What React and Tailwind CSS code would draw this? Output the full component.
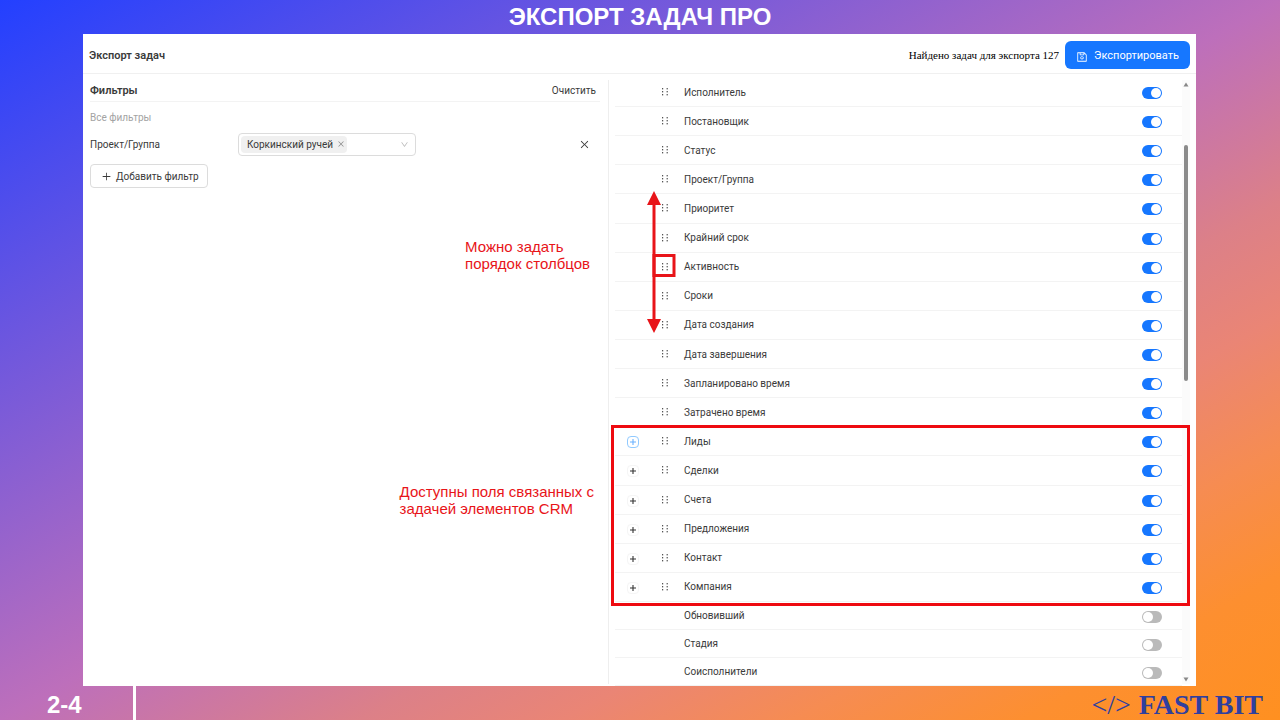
import { useState } from 'react'
import {
  AiOutlineClose,
  AiOutlineDown,
  AiOutlinePlus,
  AiOutlineSave,
} from 'react-icons/ai'

const ACTIVE_FIELDS = [
  { id: 'responsible', label: 'Исполнитель' },
  { id: 'creator', label: 'Постановщик' },
  { id: 'status', label: 'Статус' },
  { id: 'group', label: 'Проект/Группа' },
  { id: 'priority', label: 'Приоритет' },
  { id: 'deadline', label: 'Крайний срок' },
  { id: 'activity', label: 'Активность' },
  { id: 'terms', label: 'Сроки' },
  { id: 'created', label: 'Дата создания' },
  { id: 'closed', label: 'Дата завершения' },
  { id: 'planned', label: 'Запланировано время' },
  { id: 'spent', label: 'Затрачено время' },
  { id: 'leads', label: 'Лиды', expandable: true, focused: true },
  { id: 'deals', label: 'Сделки', expandable: true },
  { id: 'invoices', label: 'Счета', expandable: true },
  { id: 'quotes', label: 'Предложения', expandable: true },
  { id: 'contact', label: 'Контакт', expandable: true },
  { id: 'company', label: 'Компания', expandable: true },
]

const HIDDEN_FIELDS = [
  { id: 'changed_by', label: 'Обновивший' },
  { id: 'stage', label: 'Стадия' },
  { id: 'accomplices', label: 'Соисполнители' },
]

function DragDots() {
  return (
    <svg width="8" height="10" viewBox="0 0 8 10" fill="#555" aria-hidden="true">
      {[1, 4, 7].map((y) => (
        <g key={y}>
          <rect x="1" y={y} width="1.2" height="1.4" />
          <rect x="5.6" y={y} width="1.2" height="1.4" />
        </g>
      ))}
    </svg>
  )
}

function ExpandPlus() {
  return (
    <svg width="10" height="10" viewBox="0 0 10 10" stroke="currentColor" strokeWidth="1.1" className="shrink-0" aria-hidden="true">
      <path d="M5 2V8M2 5H8" />
    </svg>
  )
}

function Switch({ id, checked, onChange }) {
  return (
    <input
      id={id}
      type="checkbox"
      role="switch"
      checked={checked}
      onChange={onChange}
      className="relative mt-0.5 h-3 w-5 shrink-0 cursor-pointer appearance-none rounded-full bg-[#bababa] before:absolute before:left-px before:top-px before:h-2.5 before:w-2.5 before:rounded-full before:bg-white checked:bg-[#1677ff] checked:before:left-[9px]"
    />
  )
}

function FieldRow({ field, draggable, checked, onToggle }) {
  return (
    <li className="flex items-center border-b border-[#f3f3f3] pr-5">
      <div className="flex w-9 shrink-0 justify-center">
        {field.expandable && (
          <button
            type="button"
            aria-label={`Развернуть: ${field.label}`}
            className={
              field.focused
                ? 'mt-0.5 flex h-3 w-3 items-center justify-center rounded border border-[#91caff] text-[#69b1ff]'
                : 'mt-0.5 flex h-3 w-3 items-center justify-center rounded border border-[#f5f5f5] text-[#333]'
            }
          >
            <ExpandPlus />
          </button>
        )}
      </div>
      <div className="flex w-[33px] shrink-0 pl-2.5">{draggable && <DragDots />}</div>
      <label htmlFor={field.id} className="flex-1">
        {field.label}
      </label>
      <Switch id={field.id} checked={checked} onChange={onToggle} />
    </li>
  )
}

function FilterPanel() {
  return (
    <section className="relative mb-0.5 mt-1.5 border-r border-[#eeeeee] pl-[7px] pr-2">
      <div className="flex h-[22px] items-center justify-between border-b border-[#f3f3f3] pr-1">
        <h2 className="pt-0.5 text-[11px] font-semibold">Фильтры</h2>
        <button type="button">Очистить</button>
      </div>
      <p className="mt-2 leading-4 text-[#a3a3a3]">Все фильтры</p>

      <div className="mt-1.5 flex h-6 items-center">
        <label htmlFor="group-filter" className="w-[148px] shrink-0">
          Проект/Группа
        </label>
        <div className="flex h-[23px] w-[178px] items-center rounded border border-[#dcdcdc] px-0.5">
          <span className="flex h-[17px] shrink-0 items-center gap-1 whitespace-nowrap rounded-sm bg-[#f0f0f0] pl-1.5 pr-0.5">
            Коркинский ручей
            <button type="button" aria-label="Убрать" className="text-[#888]">
              <AiOutlineClose size={8} />
            </button>
          </span>
          <select id="group-filter" className="h-full min-w-0 flex-1 appearance-none bg-transparent outline-none">
            <option value=""></option>
          </select>
          <AiOutlineDown size={9} className="mr-1 shrink-0 text-[#b8b8b8]" />
        </div>
        <button type="button" aria-label="Удалить фильтр" className="ml-auto mr-2.5">
          <AiOutlineClose size={11} />
        </button>
      </div>

      <button
        type="button"
        className="mt-2 flex h-6 items-center gap-1 rounded border border-[#dcdcdc] pl-2.5 pr-2"
      >
        <AiOutlinePlus size={11} />
        Добавить фильтр
      </button>

      {/* Notes over the empty part of the panel */}
      <p className="absolute right-[18px] top-[158px] whitespace-nowrap font-['Liberation_Sans',sans-serif] text-[15px] leading-[17px] text-[#e81419]">
        Можно задать
        <br />
        порядок столбцов
      </p>
      <p className="absolute right-3.5 top-[403px] whitespace-nowrap font-['Liberation_Sans',sans-serif] text-[15px] leading-[17px] text-[#e81419]">
        Доступны поля связанных с
        <br />
        задачей элементов CRM
      </p>
    </section>
  )
}

function ColumnsPanel() {
  const [enabled, setEnabled] = useState(() => new Set(ACTIVE_FIELDS.map((f) => f.id)))

  const toggle = (id) => {
    setEnabled((prev) => {
      const next = new Set(prev)
      next.has(id) ? next.delete(id) : next.add(id)
      return next
    })
  }

  return (
    <section className="relative flex pl-1.5 pr-1.5">
      <div className="flex-1 pt-1">
        <ul className="grid h-[524px] auto-rows-fr">
          {ACTIVE_FIELDS.map((f) => (
            <FieldRow key={f.id} field={f} draggable checked={enabled.has(f.id)} onToggle={() => toggle(f.id)} />
          ))}
        </ul>
        <ul className="grid auto-rows-[28px]">
          {HIDDEN_FIELDS.map((f) => (
            <FieldRow key={f.id} field={f} checked={enabled.has(f.id)} onToggle={() => toggle(f.id)} />
          ))}
        </ul>
      </div>

      {/* Scrollbar */}
      <div className="mb-0.5 mt-1.5 flex w-2 flex-col items-center bg-[#fbfbfb] py-0.5">
        <svg width="6" height="5" viewBox="0 0 6 5" fill="#888" aria-hidden="true">
          <path d="M3 0.5 5.5 4.5H0.5Z" />
        </svg>
        <div className="mt-[58px] h-[236px] w-1 rounded-full bg-[#8b8b8b]" />
        <svg width="6" height="5" viewBox="0 0 6 5" fill="#888" className="mt-auto" aria-hidden="true">
          <path d="M3 4.5 0.5 0.5H5.5Z" />
        </svg>
      </div>

      {/* Drag direction arrow and the highlighted handle */}
      <svg className="absolute left-[38px] top-[117px]" width="30" height="142" viewBox="0 0 30 142" aria-hidden="true">
        <path d="M7 10V132" stroke="#e81419" strokeWidth="3" />
        <path d="M7 0 14 14H0ZM7 142 0 128H14Z" fill="#e81419" />
        <rect x="7" y="64.5" width="20" height="20" fill="none" stroke="#e81419" strokeWidth="3" />
      </svg>
      <div className="pointer-events-none absolute left-0.5 right-1.5 top-[351px] h-[181px] border-3 border-[#ee0a10]" />
    </section>
  )
}

export default function App() {
  return (
    <div className="flex min-h-screen flex-col bg-[linear-gradient(to_bottom_right,#2340ff_0%,#bd6fbb_50%,#dc8088_64%,#ea8575_72%,#f68c52_81%,#fd8f30_90%,#ff9020_100%)]">
      <h1 className="h-[34px] text-center font-['Liberation_Sans',sans-serif] text-2xl font-bold leading-[34px] text-white">
        ЭКСПОРТ ЗАДАЧ ПРО
      </h1>

      <main className="ml-[83px] mr-[84px] flex flex-1 flex-col bg-white font-[Roboto,'Noto_Sans',sans-serif] text-[10px] text-[#3a3a3a]">
        <header className="flex h-10 items-center border-b border-[#f0f0f0] pl-1.5 pr-1.5">
          <span className="flex-1 pt-1.5 text-[11px] font-semibold">Экспорт задач</span>
          <span className="pt-1 font-['Liberation_Serif',serif] text-[11px] text-black">
            Найдено задач для экспорта 127
          </span>
          <button
            type="button"
            className="ml-1.5 mt-0.5 flex h-7 items-center gap-1.5 rounded-md bg-[#1677ff] px-[11px] pt-1 text-[11px] text-white"
          >
            <AiOutlineSave size={12} />
            Экспортировать
          </button>
        </header>

        <div className="grid flex-1 grid-cols-[526fr_587fr]">
          <FilterPanel />
          <ColumnsPanel />
        </div>
      </main>

      <footer className="flex h-[34px] items-center justify-between pr-[17px]">
        <div className="flex h-full w-[136px] items-center border-r-3 border-white pl-[47px] pt-1 font-['Liberation_Sans',sans-serif] text-2xl font-bold text-white">
          2-4
        </div>
        <div className="flex items-center gap-2 pt-1 font-['Liberation_Serif',serif] text-[28px] leading-[34px] text-[#2f3f9f]">
          <span>&lt;/&gt;</span>
          <span className="font-bold">FAST BIT</span>
        </div>
      </footer>
    </div>
  )
}
